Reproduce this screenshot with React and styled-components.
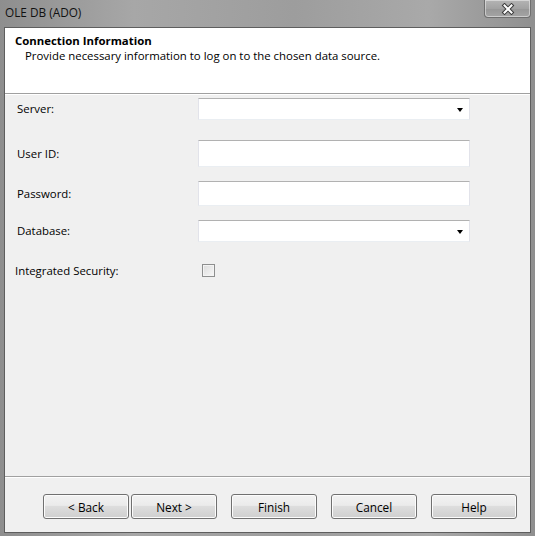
import React from "react";
import styled, { createGlobalStyle } from "styled-components";

const Global = createGlobalStyle`
  html, body { margin: 0; padding: 0; }
  body { font-family: "Open Sans", "Noto Sans", Arial, sans-serif; font-size: 11.4px; color: #000; }
  * { box-sizing: border-box; }
`;

const Window = styled.div`
  width: 535px;
  height: 536px;
  display: flex;
  flex-direction: column;
  background: linear-gradient(90deg, #8e8e8e 0%, #a7a7a7 25%, #9d9d9d 55%, #a9a9a9 80%, #8f8f8f 100%);
  padding: 0 4px 3px 4px;
  position: relative;
`;

const TitleBar = styled.div`
  height: 27px;
  display: flex;
  align-items: center;
  padding-left: 1px;
  padding-bottom: 4px;
  font-size: 11.8px;
  color: #111;
`;

const CloseButton = styled.div`
  position: absolute;
  top: 0;
  right: 4px;
  width: 47px;
  height: 18px;
  border: 1px solid #6f6f6f;
  border-top: none;
  border-radius: 0 0 4px 4px;
  background: linear-gradient(#b4b4b4, #a2a2a2 50%, #979797 51%, #a4a4a4);
  box-shadow: inset 0 0 0 1px rgba(255,255,255,0.45);
  display: flex;
  align-items: center;
  justify-content: center;
`;

const Panel = styled.div`
  flex: 1;
  display: flex;
  flex-direction: column;
  border: 1px solid #5e5e5e;
  background: #f0f0f0;
`;

const Header = styled.div`
  height: 66px;
  background: #fff;
  border-bottom: 1px solid #a0a0a0;
  box-shadow: 0 1px 0 #fff;
  padding: 6px 0 0 10px;
`;

const HeaderTitle = styled.div`
  font-weight: 700;
  line-height: 14px;
`;

const HeaderSub = styled.div`
  padding-left: 10px;
  line-height: 16px;
`;

const Form = styled.div`
  flex: 1;
  display: grid;
  grid-template-columns: 181px 272px;
  padding: 4px 0 0 12px;
  align-content: start;
`;

const Label = styled.div`
  display: flex;
  align-items: center;
  height: ${(p) => p.h}px;
  margin-top: ${(p) => p.mt}px;
  margin-left: ${(p) => p.ml || 0}px;
  padding-bottom: 1px;
`;

const Field = styled.div`
  height: ${(p) => p.h}px;
  margin-top: ${(p) => p.mt}px;
  background: #fff;
  border: 1px solid #e2e3ea;
  border-top-color: #b1b1b1;
  border-bottom-color: #eaeef2;
  display: flex;
  align-items: center;
  justify-content: flex-end;
  padding-right: 6px;
`;

const Arrow = styled.div`
  width: 0;
  height: 0;
  border-left: 3.5px solid transparent;
  border-right: 3.5px solid transparent;
  border-top: 4px solid #000;
  margin-top: 1px;
`;

const CheckCell = styled.div`
  height: ${(p) => p.h}px;
  margin-top: ${(p) => p.mt}px;
  display: flex;
  align-items: center;
  padding-left: 4px;
`;

const CheckBox = styled.div`
  width: 13px;
  height: 13px;
  border: 1px solid #8e8f8f;
  background: linear-gradient(135deg, #dcdcdc, #f8f8f8);
  box-shadow: inset 0 0 0 1px #f4f4f4;
`;

const Footer = styled.div`
  height: 56px;
  border-top: 1px solid #a0a0a0;
  box-shadow: inset 0 1px 0 #fff;
  display: flex;
  justify-content: flex-end;
  align-items: flex-start;
  padding: 17px 13px 0 0;
  gap: 14px;
`;

const Pair = styled.div`
  display: flex;
  gap: 2px;
`;

const Button = styled.button`
  width: 86px;
  height: 25px;
  border: 1px solid #707070;
  border-radius: 3px;
  background: linear-gradient(#f2f2f2 0%, #ebebeb 45%, #dddddd 50%, #cfcfcf 100%);
  box-shadow: inset 0 0 0 1px #fcfcfc;
  font-family: inherit;
  font-size: 11.8px;
  color: #000;
  padding: 0;
`;

export default function App() {
  return (
    <>
      <Global />
      <Window>
        <TitleBar>OLE DB (ADO)</TitleBar>
        <CloseButton>
          <svg width="14" height="12" viewBox="0 0 14 12">
            <path d="M3.5 2.5 L10.5 9.5 M10.5 2.5 L3.5 9.5" stroke="#3a3a3a" strokeWidth="4" strokeLinecap="square" />
            <path d="M3.5 2.5 L10.5 9.5 M10.5 2.5 L3.5 9.5" stroke="#fff" strokeWidth="2" strokeLinecap="square" />
          </svg>
        </CloseButton>
        <Panel>
          <Header>
            <HeaderTitle>Connection Information</HeaderTitle>
            <HeaderSub>Provide necessary information to log on to the chosen data source.</HeaderSub>
          </Header>
          <Form>
            <Label h={22} mt={0}>Server:</Label>
            <Field h={22} mt={0}><Arrow /></Field>
            <Label h={27} mt={20}>User ID:</Label>
            <Field h={27} mt={20} />
            <Label h={25} mt={14}>Password:</Label>
            <Field h={25} mt={14} />
            <Label h={22} mt={14}>Database:</Label>
            <Field h={22} mt={14}><Arrow /></Field>
            <Label h={13} mt={22} ml={-2}>Integrated Security:</Label>
            <CheckCell h={13} mt={22}><CheckBox /></CheckCell>
          </Form>
          <Footer>
            <Pair>
              <Button>&lt; Back</Button>
              <Button>Next &gt;</Button>
            </Pair>
            <Button>Finish</Button>
            <Button>Cancel</Button>
            <Button>Help</Button>
          </Footer>
        </Panel>
      </Window>
    </>
  );
}
